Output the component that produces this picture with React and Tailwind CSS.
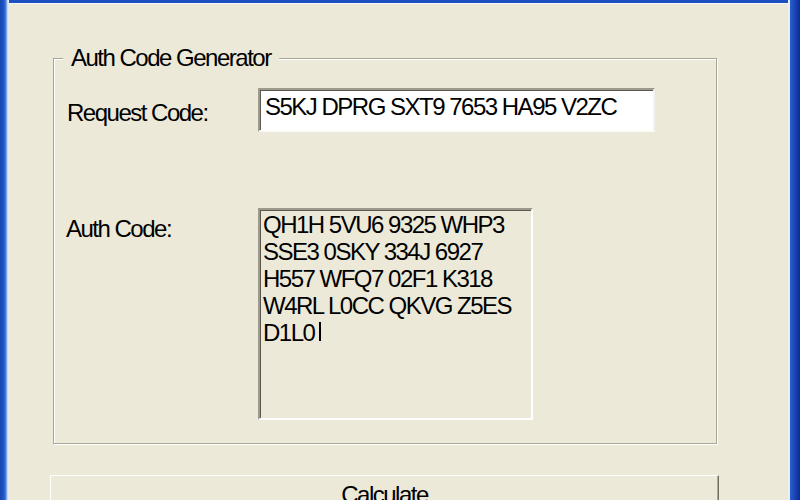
export default function App() {
  const lines = [
    "QH1H 5VU6 9325 WHP3",
    "SSE3 0SKY 334J 6927",
    "H557 WFQ7 02F1 K318",
    "W4RL L0CC QKVG Z5ES",
  ];
  return (
    <div className="flex w-[800px] h-[500px] overflow-hidden bg-[#ece9d8] font-['Liberation_Sans',Arial,sans-serif] text-[24px] tracking-[-1.5px] text-black">
      <div className="w-[9px] shrink-0 bg-[linear-gradient(to_right,#1746b2_0px,#1f56c6_4px,#4f86de_6px,#a9c3ee_7px,#e3e9f4_8px)]" />
      <div className="flex-1 min-w-0 flex flex-col">
        <div className="h-[3px] shrink-0 bg-[#1c4fbf]" />
        <div className="h-[1px] shrink-0 bg-[#f4f6fb]" />
        <div className="flex-1 flex flex-col pl-[44px] pt-[54px]">
          <div className="relative w-[664px] h-[386px] shrink-0 border border-[#a8a698] shadow-[inset_1px_1px_0_#ffffff,1px_1px_0_#ffffff]">
            <div className="absolute -top-[14px] left-[9px] px-[8px] leading-[26px] bg-[#ece9d8] whitespace-nowrap">
              Auth Code Generator
            </div>
            <div className="grid grid-cols-[204px_auto] pt-[29px]">
              <div className="pl-[13px] mt-[12px] leading-[26px] whitespace-nowrap">Request Code:</div>
              <div className="w-[397px] h-[44px] bg-white border-2 border-t-[#9d9a8c] border-l-[#9d9a8c] border-b-[#fbfbf8] border-r-[#f4f3ee] shadow-[inset_1px_1px_0_#5a584f] pl-[5px] pt-[3px] leading-[27px] whitespace-nowrap">
                S5KJ DPRG SXT9 7653 HA95 V2ZC
              </div>
              <div className="pl-[12px] mt-[84px] leading-[26px] whitespace-nowrap">Auth Code:</div>
              <div className="mt-[76px] w-[275px] h-[212px] bg-[#ece9d8] border-2 border-t-[#9d9a8c] border-l-[#9d9a8c] border-b-white border-r-white shadow-[inset_1px_1px_0_#5a584f] pl-[3px] pt-[1px] leading-[27px] whitespace-nowrap">
                {lines.map((l) => (
                  <div key={l}>{l}</div>
                ))}
                <div>
                  D1L0
                  <span className="inline-block align-baseline w-[2px] h-[19px] ml-[5px] bg-black" />
                </div>
              </div>
            </div>
          </div>
          <div className="-ml-[3px] mt-[31px] w-[669px] h-[60px] shrink-0 border border-t-white border-l-white border-r-[#716f64] border-b-[#716f64] shadow-[inset_-1px_-1px_0_#aca899] pt-[6px] leading-[26px] text-center">
            Calculate
          </div>
        </div>
      </div>
      <div className="w-[12px] shrink-0 bg-[linear-gradient(to_right,#e9eef8_0px,#e9eef8_2px,#2a5fcc_2px,#0a2a9a_12px)]" />
    </div>
  );
}
